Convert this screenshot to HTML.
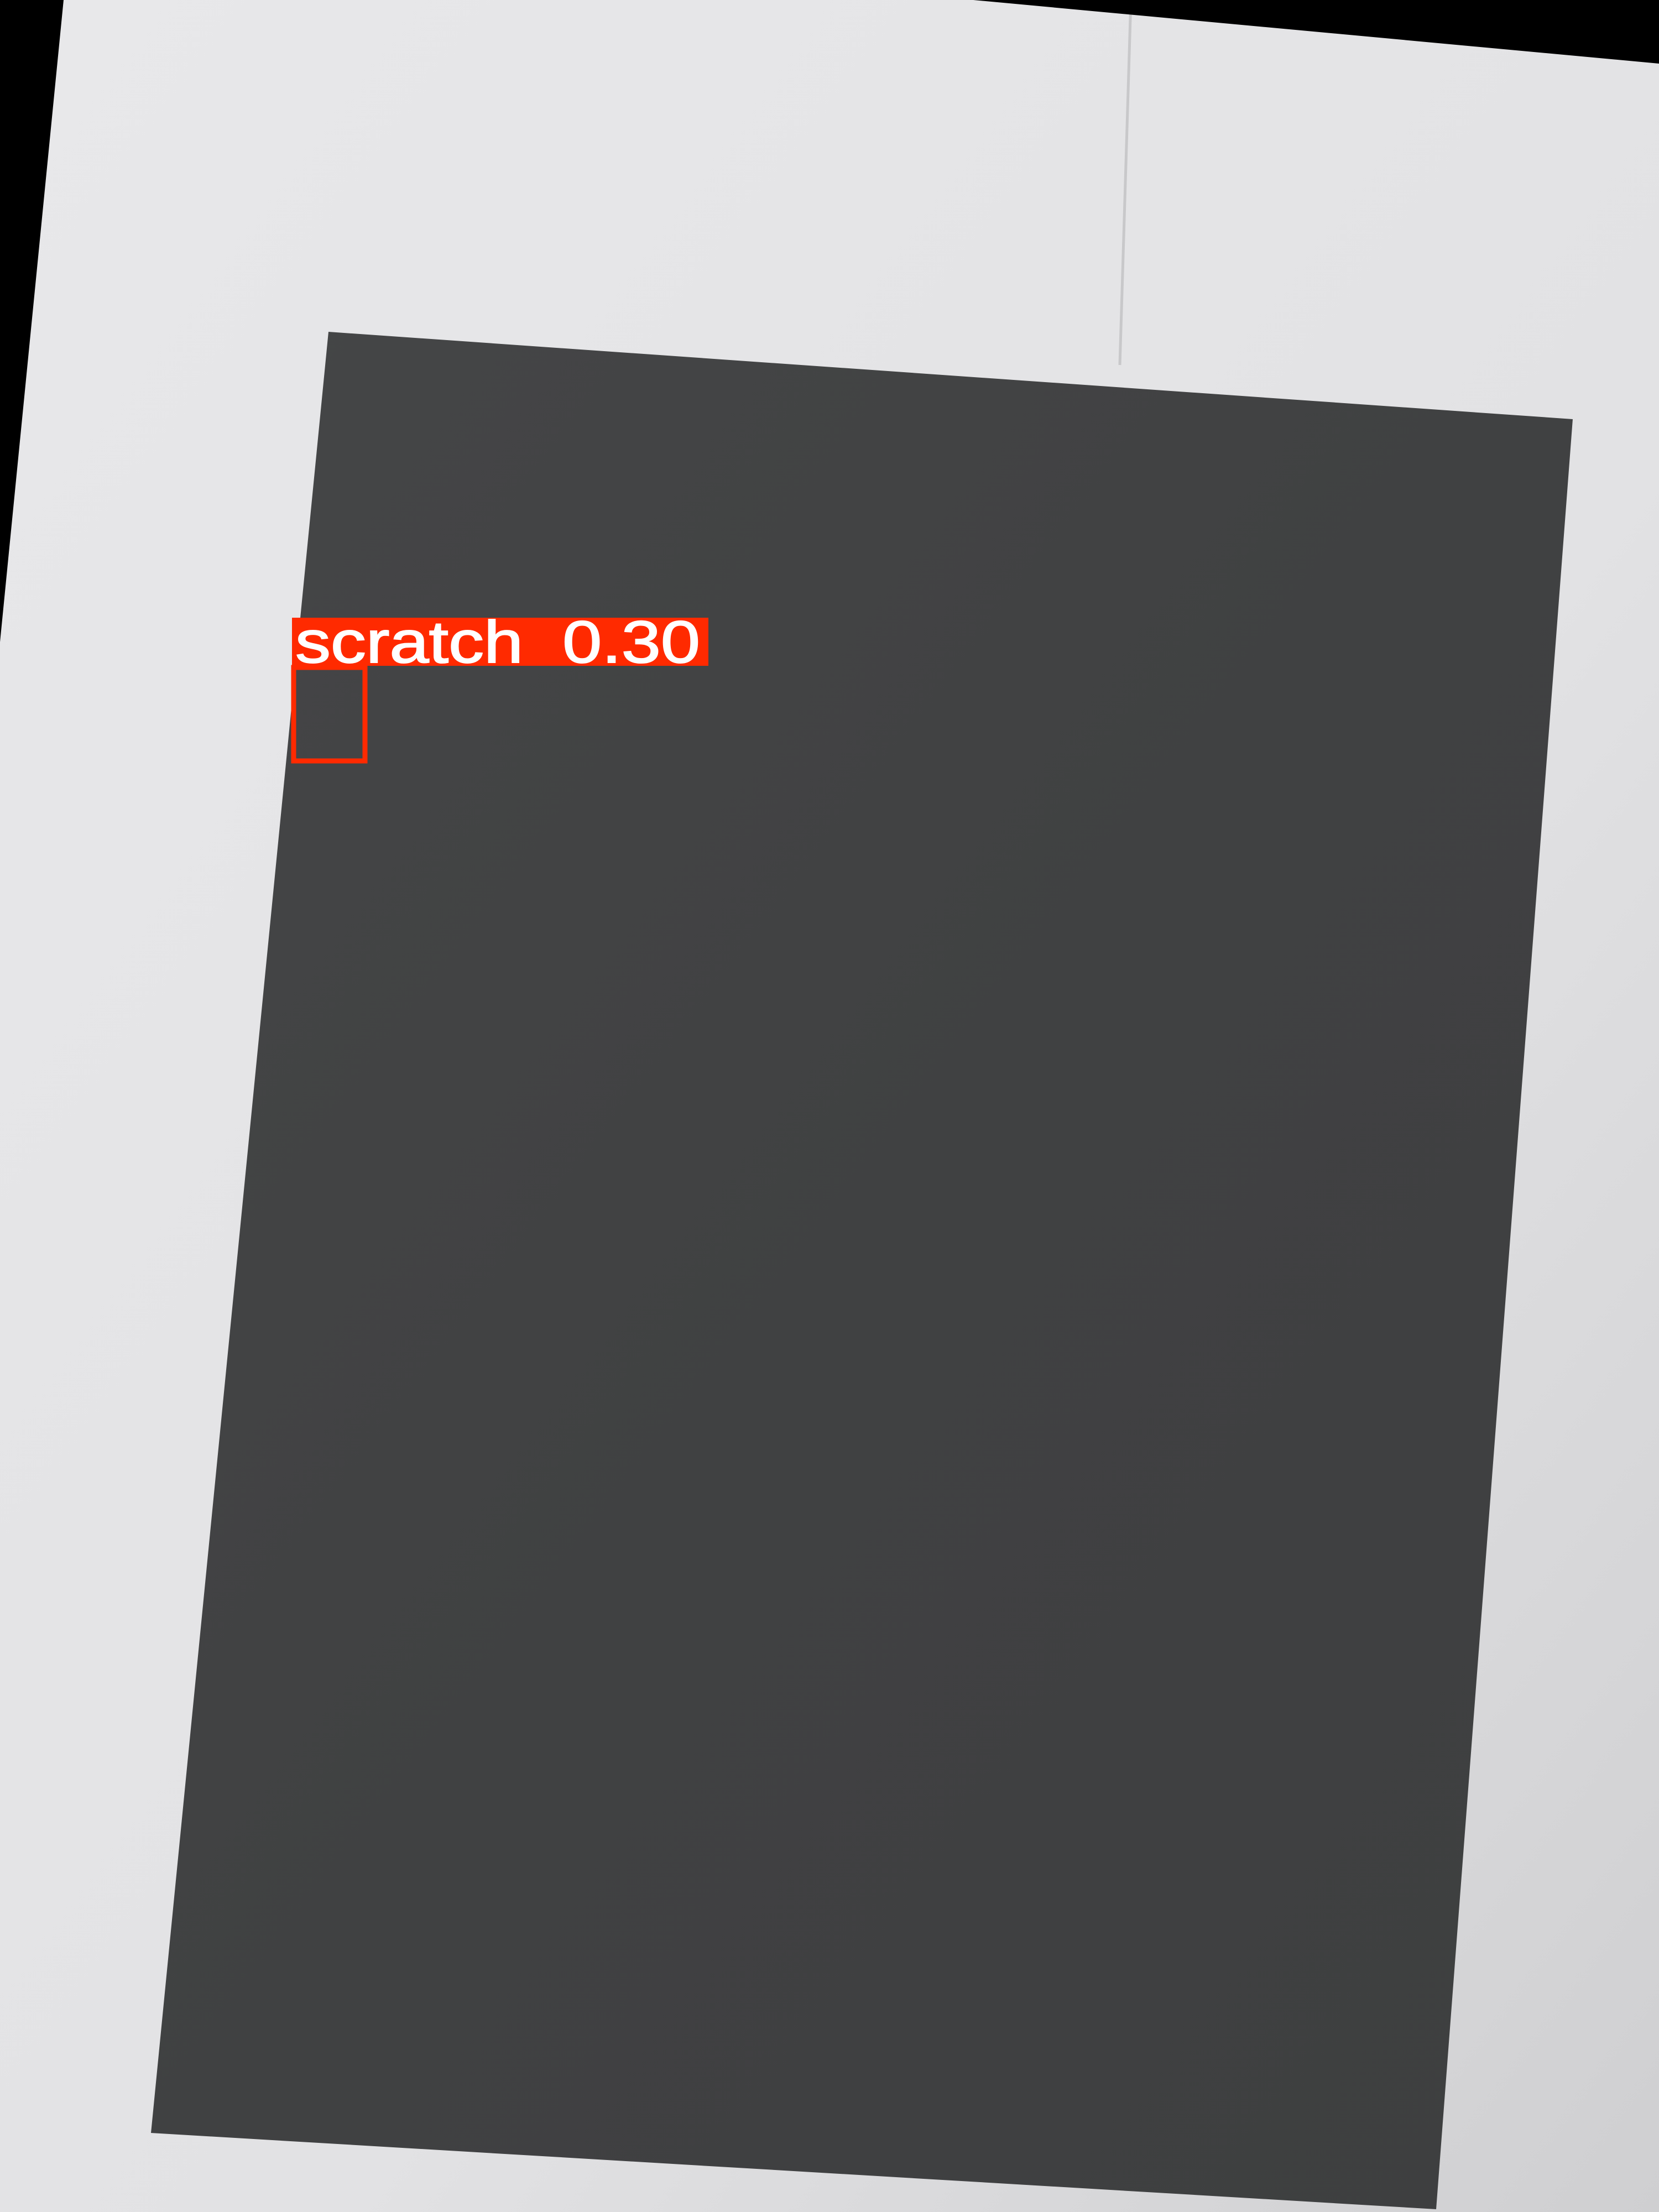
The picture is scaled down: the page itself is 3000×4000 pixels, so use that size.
<!DOCTYPE html>
<html><head><meta charset="utf-8"><style>
html,body{margin:0;padding:0;width:3000px;height:4000px;overflow:hidden;background:#e4e4e6}
svg{display:block}
</style></head><body>
<svg width="3000" height="4000" viewBox="0 0 3000 4000" xmlns="http://www.w3.org/2000/svg">
<defs>
<linearGradient id="bg" x1="0" y1="0" x2="1" y2="1">
<stop offset="0" stop-color="#e8e8ea"/><stop offset="0.6" stop-color="#e2e2e4"/><stop offset="1" stop-color="#cfcfd1"/>
</linearGradient>
<linearGradient id="box" x1="0" y1="0" x2="1" y2="1">
<stop offset="0" stop-color="#454647"/><stop offset="0.5" stop-color="#404142"/><stop offset="1" stop-color="#3e3f40"/>
</linearGradient>
</defs>
<rect width="3000" height="4000" fill="url(#bg)"/>
<line x1="2045" y1="0" x2="2025" y2="660" stroke="#c8c8ca" stroke-width="5"/>
<polygon points="0,0 115,0 0,1161" fill="#000"/>
<polygon points="1760,0 3000,0 3000,115" fill="#000"/>
<polygon points="594,600 2844,758 2597,3995 273,3857" fill="url(#box)"/>
<rect x="528" y="1117" width="753" height="87" fill="#ff2a00"/>
<text x="534" y="1198" font-family="Liberation Sans, DejaVu Sans, sans-serif" font-size="108" fill="#fff" stroke="#fff" stroke-width="2" textLength="732" lengthAdjust="spacingAndGlyphs" xml:space="preserve">scratch  0.30</text>
<rect x="531" y="1207" width="129" height="169" fill="none" stroke="#ff2a00" stroke-width="9"/>
</svg>
</body></html>
